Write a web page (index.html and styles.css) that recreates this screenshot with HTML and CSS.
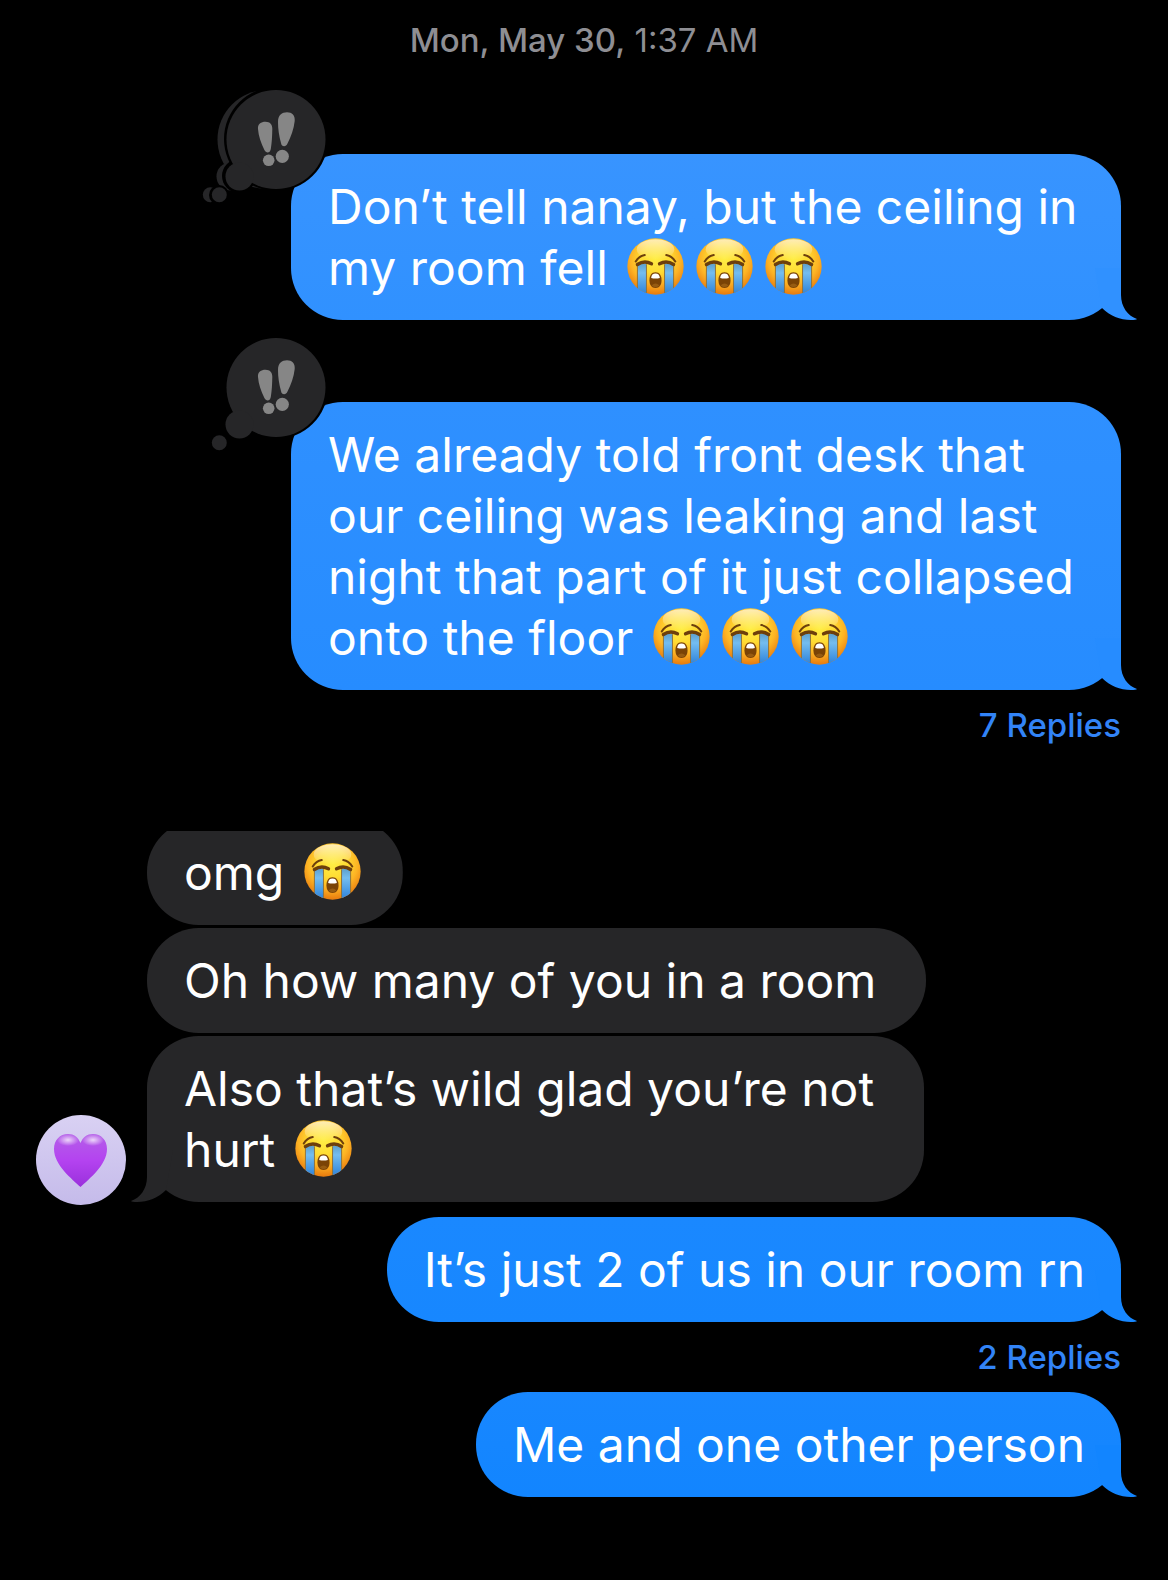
FILE: index.html
```html
<!DOCTYPE html>
<html lang="en">
<head>
<meta charset="utf-8">
<meta name="viewport" content="width=device-width, initial-scale=1">
<title>Messages</title>
<link rel="stylesheet" href="styles.css">
</head>
<body>
<svg class="defs" aria-hidden="true">
  <defs>
    <radialGradient id="face" cx="50%" cy="36%" r="62%">
      <stop offset="0" stop-color="#ffee45"/>
      <stop offset="0.42" stop-color="#ffdb33"/>
      <stop offset="0.72" stop-color="#fdb324"/>
      <stop offset="1" stop-color="#ea8010"/>
    </radialGradient>
    <linearGradient id="shine" x1="0" y1="0" x2="0" y2="1">
      <stop offset="0" stop-color="#fff" stop-opacity="0.65"/>
      <stop offset="1" stop-color="#fff" stop-opacity="0"/>
    </linearGradient>
    <linearGradient id="tear" x1="0" y1="0" x2="0" y2="1">
      <stop offset="0" stop-color="#5d9fcc"/>
      <stop offset="0.3" stop-color="#74bdf0"/>
      <stop offset="1" stop-color="#2a80da"/>
    </linearGradient>
    <linearGradient id="heart" x1="0" y1="0" x2="0" y2="1">
      <stop offset="0" stop-color="#b45fe8"/>
      <stop offset="0.5" stop-color="#b443f0"/>
      <stop offset="1" stop-color="#9a30dc"/>
    </linearGradient>
    <radialGradient id="gloss">
      <stop offset="0" stop-color="#fff" stop-opacity="0.75"/>
      <stop offset="1" stop-color="#fff" stop-opacity="0"/>
    </radialGradient>
    <clipPath id="head"><circle cx="85" cy="85" r="84"/></clipPath>
  </defs>
  <symbol id="sob" viewBox="0 0 170 170">
    <circle cx="85" cy="85" r="84" fill="url(#face)"/>
    <ellipse cx="85" cy="34" rx="56" ry="30" fill="url(#shine)"/>
    <g clip-path="url(#head)">
      <path d="M32 76h26v94H32zM112 76h26v94h-26z" fill="url(#tear)"/>
      <path d="M31 78v92M58 78v92M112 78v92M139 78v92" stroke="#8d7440" stroke-width="3"/>
    </g>
    <g fill="none" stroke="#6d3f0c" stroke-linecap="round">
      <path d="M26 70Q36 54 53 51M144 70Q134 54 117 51" stroke-width="6"/>
      <path d="M31 79Q52 65 73 77M139 79Q118 65 97 77" stroke-width="10"/>
    </g>
    <path d="M85 102C97 102 103 112 103 126S97 149 85 149 67 140 67 126 73 102 85 102Z" fill="#7a4306"/>
    <path d="M72 119C73 110 77 106 85 106S97 110 98 119Q85 123 72 119Z" fill="#fff"/>
    <path d="M73 142Q85 130 97 142Q85 152 73 142Z" fill="#965b12"/>
  </symbol>
  <symbol id="tail" viewBox="0 0 52 52">
    <path d="M36 0V27C36 39 43 48 52 51Q51 52 46 52C35 52 25 48 17 40L10 0Z"/>
  </symbol>
  <symbol id="thought" viewBox="0 0 130 120">
    <circle cx="76" cy="53" r="52" fill="#000"/>
    <circle cx="39" cy="90" r="17" fill="#000"/>
    <circle cx="19" cy="109" r="10" fill="#000"/>
    <circle cx="76" cy="53.5" r="49.5"/>
    <circle cx="39.5" cy="90.5" r="14"/>
    <circle cx="19.3" cy="108.7" r="7.5"/>
  </symbol>
  <symbol id="emphasis" viewBox="0 0 130 120">
    <path d="M58 43C57.5 38 61 35.7 65.5 35.7S72.5 38.5 72.3 43C72.2 50 71.8 57 70.8 63C70 67.500 66 67.500 64.4 64C61 57 58.5 50 58 43Z"/>
    <path d="M78 36C78 29 82 26.3 87 26.3S95.3 29.5 94.7 35C93.8 43 91 51 87.5 57.5C86 61.500 81.500 61 81 57C79 50 78 43 78 36Z"/>
    <circle cx="68.7" cy="74.3" r="5.8"/>
    <circle cx="82.3" cy="70.3" r="6.6"/>
  </symbol>
</svg>

<main class="thread">
  <time class="stamp" datetime="05-30T01:37"><strong>Mon, May 30,</strong> 1:37 AM</time>

  <div class="row sent">
    <div class="bubble wide tone-1">
      Don’t tell nanay, but the ceiling in<br>my room fell <svg class="emoji" role="img" aria-label="sobbing"><use href="#sob"/></svg><svg class="emoji" role="img" aria-label="sobbing"><use href="#sob"/></svg><svg class="emoji" role="img" aria-label="sobbing"><use href="#sob"/></svg>
      <svg class="tail" aria-hidden="true"><use href="#tail"/></svg>
      <svg class="tapback stacked" viewBox="-9 0 139 120" role="img" aria-label="Emphasized twice"><use href="#thought" x="-9" width="130" height="120"/><use href="#thought" width="130" height="120"/><use class="mark" href="#emphasis" width="130" height="120"/></svg>
    </div>
  </div>

  <div class="row sent spaced">
    <div class="bubble wide tone-2">
      We already told front desk that<br>our ceiling was leaking and last<br>night that part of it just collapsed<br>onto the floor <svg class="emoji" role="img" aria-label="sobbing"><use href="#sob"/></svg><svg class="emoji" role="img" aria-label="sobbing"><use href="#sob"/></svg><svg class="emoji" role="img" aria-label="sobbing"><use href="#sob"/></svg>
      <svg class="tail" aria-hidden="true"><use href="#tail"/></svg>
      <svg class="tapback" viewBox="0 0 130 120" role="img" aria-label="Emphasized"><use href="#thought" width="130" height="120"/><use class="mark" href="#emphasis" width="130" height="120"/></svg>
    </div>
  </div>
  <button class="replies" type="button">7 Replies</button>

  <div class="group">
    <svg class="avatar" viewBox="0 0 90 90" role="img" aria-label="Purple heart">
      <path d="M44.5 72C36 64 18 50 18 34C18 25 24 19 32 19C38 19 42 22 44.5 28C47 22 51 19 57 19C65 19 71 25 71 34C71 50 53 64 44.5 72Z" fill="url(#heart)"/>
      <ellipse cx="32" cy="25" rx="11" ry="6" fill="url(#gloss)"/>
      <ellipse cx="57" cy="25" rx="11" ry="6" fill="url(#gloss)"/>
    </svg>
    <div class="received">
      <div class="bubble cropped">omg <svg class="emoji" role="img" aria-label="sobbing"><use href="#sob"/></svg></div>
      <div class="bubble">Oh how many of you in a room</div>
      <div class="bubble">
        Also that’s wild glad you’re not<br>hurt <svg class="emoji" role="img" aria-label="sobbing"><use href="#sob"/></svg>
        <svg class="tail" aria-hidden="true"><use href="#tail"/></svg>
      </div>
    </div>
  </div>

  <div class="row sent">
    <div class="bubble tone-3">It’s just 2 of us in our room rn<svg class="tail" aria-hidden="true"><use href="#tail"/></svg></div>
  </div>
  <button class="replies" type="button">2 Replies</button>

  <div class="row sent">
    <div class="bubble tone-4">Me and one other person<svg class="tail" aria-hidden="true"><use href="#tail"/></svg></div>
  </div>
</main>
</body>
</html>
```
FILE: styles.css
```css
* {
  box-sizing: border-box;
}

body {
  margin: 0;
  background: #000;
  color: #fff;
  font-family: Inter, "Liberation Sans", sans-serif;
}

.defs {
  position: absolute;
  width: 0;
  height: 0;
}

.thread {
  display: flex;
  flex-direction: column;
  padding: 20px 47px 83px 36px;
}

.stamp {
  margin-bottom: 94px;
  padding-left: 11px;
  color: #8e8e93;
  font-size: 33px;
  line-height: 40px;
  text-align: center;
}

.stamp strong {
  font-weight: 500;
}

.row {
  display: flex;
}

.sent {
  justify-content: flex-end;
}

.spaced {
  margin-top: 82px;
}

.bubble {
  position: relative;
  width: fit-content;
  padding: 22px 36px 22px 37px;
  border-radius: 52px;
  background: linear-gradient(var(--from), var(--to));
  font-size: 48px;
  line-height: 61px;
  white-space: nowrap;
  --from: #262628;
  --to: #262628;
}

.wide {
  width: 76.5%;
  min-width: fit-content;
}

.tone-1 { --from: #3894ff; --to: #3091ff; }
.tone-2 { --from: #2f90ff; --to: #268cff; }
.tone-3 { --from: #1a88ff; --to: #1787ff; }
.tone-4 { --from: #1887ff; --to: #1285ff; }

.emoji {
  width: 57px;
  height: 57px;
  margin: -10px 6px;
  vertical-align: 0;
}

.tail {
  position: absolute;
  right: -16px;
  bottom: 0;
  width: 52px;
  height: 52px;
  fill: var(--to);
}

.tapback {
  position: absolute;
  top: -68px;
  left: -91px;
  width: 130px;
  height: 120px;
  fill: #262628;
}

.tapback.stacked {
  left: -100px;
  width: 139px;
}

.mark {
  fill: #868686;
}

.replies {
  align-self: flex-end;
  margin: 15px 0;
  padding: 0;
  border: 0;
  background: none;
  color: #3284f7;
  font: 500 33px/40px Inter, "Liberation Sans", sans-serif;
}

.group {
  display: flex;
  align-items: flex-end;
  gap: 21px;
  margin: 71px 0 15px;
}

.avatar {
  width: 90px;
  height: 90px;
  margin-bottom: -3px;
  border-radius: 50%;
  background: linear-gradient(#d9d1f3, #c5bbea);
}

.received {
  display: flex;
  flex-direction: column;
  gap: 3px;
}

.received .bubble {
  padding-right: 50px;
}

.received .tail {
  right: auto;
  left: -16px;
  transform: scaleX(-1);
}

.received .cropped {
  margin-top: -11px;
  padding-right: 36px;
  clip-path: inset(11px 0 0);
}
```
